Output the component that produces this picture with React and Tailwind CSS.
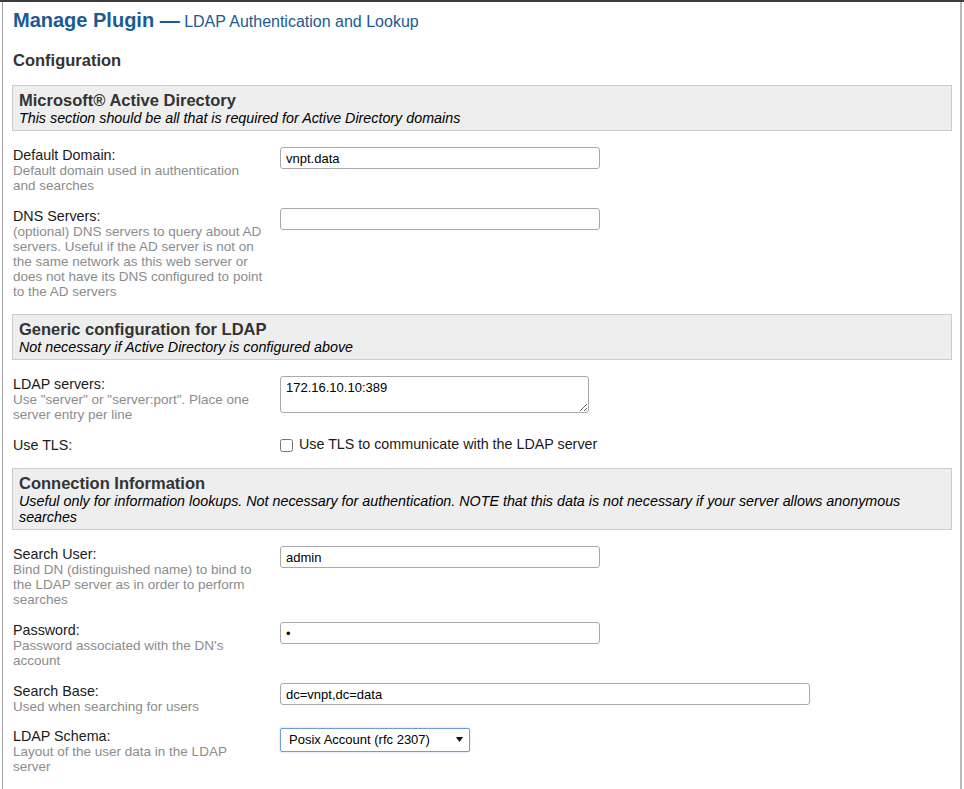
import { useState } from "react";

/* DATA */

const sections = [
  {
    title: "Microsoft® Active Directory",
    note: "This section should be all that is required for Active Directory domains",
    rows: [
      {
        label: "Default Domain:",
        desc: "Default domain used in authentication and searches",
        kind: "text",
        value: "vnpt.data",
      },
      {
        label: "DNS Servers:",
        desc: "(optional) DNS servers to query about AD servers. Useful if the AD server is not on the same network as this web server or does not have its DNS configured to point to the AD servers",
        kind: "text",
        value: "",
      },
    ],
  },
  {
    title: "Generic configuration for LDAP",
    note: "Not necessary if Active Directory is configured above",
    rows: [
      {
        label: "LDAP servers:",
        desc: 'Use "server" or "server:port". Place one server entry per line',
        kind: "textarea",
        value: "172.16.10.10:389",
      },
      {
        label: "Use TLS:",
        kind: "checkbox",
        text: "Use TLS to communicate with the LDAP server",
      },
    ],
  },
  {
    title: "Connection Information",
    note: "Useful only for information lookups. Not necessary for authentication. NOTE that this data is not necessary if your server allows anonymous searches",
    rows: [
      {
        label: "Search User:",
        desc: "Bind DN (distinguished name) to bind to the LDAP server as in order to perform searches",
        kind: "text",
        value: "admin",
      },
      {
        label: "Password:",
        desc: "Password associated with the DN's account",
        kind: "password",
        value: "x",
      },
      {
        label: "Search Base:",
        desc: "Used when searching for users",
        kind: "wide",
        value: "dc=vnpt,dc=data",
      },
      {
        label: "LDAP Schema:",
        desc: "Layout of the user data in the LDAP server",
        kind: "select",
        value: "Posix Account (rfc 2307)",
      },
    ],
  },
];

/* FIELD */

function Field({ row }) {
  const [val, setVal] = useState(row.value || "");

  if (row.kind === "textarea") {
    return (
      <textarea
        value={val}
        onChange={(e) => setVal(e.target.value)}
        className="w-[309px] h-[37px] border border-[#a9a9a9] rounded-[3px] px-[5px] py-[3px] text-[13px] leading-[15px] text-black outline-none"
      />
    );
  }

  if (row.kind === "checkbox") {
    return (
      <label className="flex items-center h-[16px]">
        <input type="checkbox" className="m-0 w-[13px] h-[13px]" />
        <span className="ml-[6px] text-[14.3px] text-[#1a1a1a]">{row.text}</span>
      </label>
    );
  }

  if (row.kind === "select") {
    return (
      <div className="relative w-[190px] h-[24px]">
        <select
          value={val}
          onChange={(e) => setVal(e.target.value)}
          className="appearance-none w-full h-full border border-[#6b9fd6] rounded-[2px] bg-white pl-[8px] text-[13px] text-black outline-none shadow-[0_0_2px_#a9c8ea]"
        >
          <option>Posix Account (rfc 2307)</option>
          <option>Active Directory or compatible</option>
        </select>
        <svg
          className="absolute right-[7px] top-[10px] pointer-events-none"
          width="7"
          height="5"
          viewBox="0 0 7 5"
        >
          <path d="M0 0h7L3.5 5z" fill="#111" />
        </svg>
      </div>
    );
  }

  return (
    <input
      type={row.kind === "password" ? "password" : "text"}
      value={val}
      onChange={(e) => setVal(e.target.value)}
      className={
        (row.kind === "wide" ? "w-[530px]" : "w-[320px]") +
        " h-[22px] border border-[#a9a9a9] rounded-[3px] px-[5px] text-[13px] text-black outline-none"
      }
    />
  );
}

/* PAGE */

export default function App() {
  return (
    <div className="w-[964px] h-[789px] overflow-hidden bg-white font-['Liberation_Sans',Arial,sans-serif] flex flex-col">
      <div className="h-[2px] bg-[#3d3d3d] shrink-0" />

      <div className="flex-1 ml-[2px] w-[960px] border-l border-l-[#a3a3a3] border-r-2 border-r-[#b9b9b9] pl-[9px] pr-[8px] pt-[6px]">
        <h1 className="pl-[1px] h-[24px] leading-[24px] text-[#1b5a93] whitespace-nowrap">
          <span className="text-[20px] font-bold">Manage Plugin —</span>{" "}
          <span className="text-[16px]">LDAP Authentication and Lookup</span>
        </h1>

        <h2 className="pl-[1px] mt-[18px] text-[16.5px] leading-[20px] font-bold text-[#333]">
          Configuration
        </h2>

        <div className="mt-[15px]">
          {sections.map((s, i) => (
            <div key={i} className={i > 0 ? "mt-[8px]" : ""}>
              <div className="bg-[#eeeeee] border border-[#cccccc] px-[6px] pt-[5px] pb-[4px]">
                <div className="text-[16.5px] leading-[18px] font-bold text-[#333]">
                  {s.title}
                </div>
                <div className="mt-[1px] text-[14.3px] leading-[16px] italic text-black">
                  {s.note}
                </div>
              </div>

              {s.rows.map((r, j) => (
                <div
                  key={j}
                  className={
                    "flex items-start pl-[1px] pb-[7px] " +
                    (j === 0 ? "pt-[16px]" : r.kind === "select" ? "pt-[6px]" : "pt-[8px]")
                  }
                >
                  <div
                    className={
                      "w-[267px] shrink-0 pr-[16px] " +
                      (r.kind === "select" ? "pt-[1px]" : "")
                    }
                  >
                    <div className="text-[14.3px] leading-[16px] text-[#1a1a1a]">
                      {r.label}
                    </div>
                    {r.desc && (
                      <div className="w-[250.5px] text-[13.5px] leading-[15px] text-[#8c8c8c]">
                        {r.desc}
                      </div>
                    )}
                  </div>
                  <Field row={r} />
                </div>
              ))}
            </div>
          ))}
        </div>
      </div>
    </div>
  );
}
